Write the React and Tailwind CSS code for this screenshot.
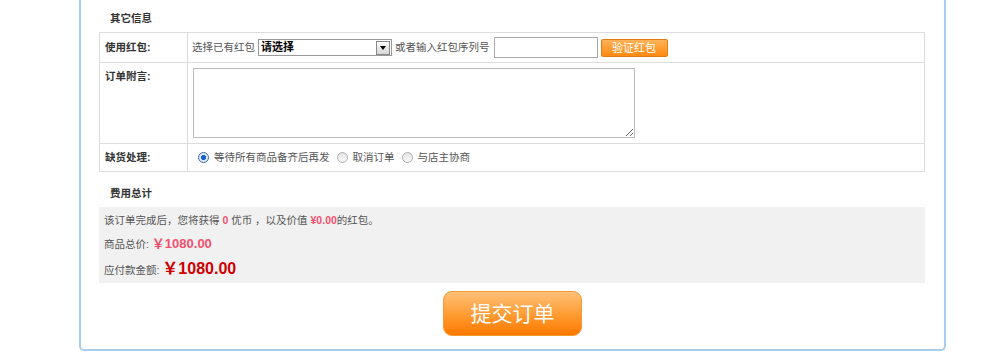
import { useState } from 'react';

const FONT = { fontFamily: '"Liberation Sans", Arial, "Noto Sans CJK SC", sans-serif' };

function Radio({ checked }) {
  return (
    <span className={`inline-block w-[11px] h-[11px] rounded-full border ${checked ? 'border-[#3a6ea5] bg-[radial-gradient(circle,#1a63c8_0,#1a63c8_35%,#dfe9f5_45%)]' : 'border-[#b0b0b0] bg-[linear-gradient(#e4e4e4,#fafafa)]'}`} />
  );
}

export default function App() {
  const [ship, setShip] = useState(0);
  const opts = ['等待所有商品备齐后再发', '取消订单', '与店主协商'];

  return (
    <div className="w-[982px] h-[354px] bg-white text-[10.5px] text-[#555] overflow-hidden" style={FONT}>
      <div className="ml-[79px] w-[867px] h-[351px] border-x-2 border-b-2 border-[#a9cdef] rounded-b-[5px] px-[18px]">
        <h3 className="h-[32px] pl-[11px] pt-[11px] font-bold text-[#333] leading-[14px]">其它信息</h3>

        <div className="w-[826px] border border-[#dcdcdc]">
          <div className="flex h-[30px] border-b border-[#dcdcdc]">
            <div className="w-[88px] shrink-0 border-r border-[#dcdcdc] pl-[5px] flex items-center font-bold text-[#333]">使用红包:</div>
            <div className="flex items-center pl-[4px]">
              <span>选择已有红包</span>
              <div className="ml-[3px] w-[134px] h-[17px] border border-[#999] flex items-center justify-between bg-white">
                <span className="pl-[2px] text-black font-bold text-[11px]">请选择</span>
                <span className="w-[14px] h-[14px] mr-[1px] border border-[#888] bg-[linear-gradient(#fafafa,#d8d8d8)] flex items-center justify-center">
                  <span className="block w-0 h-0 border-x-[3px] border-x-transparent border-t-[4px] border-t-black" />
                </span>
              </div>
              <span className="ml-[3px]">或者输入红包序列号</span>
              <input className="ml-[4px] w-[104px] h-[21px] border border-[#aaa] outline-none" />
              <button className="ml-[3px] w-[67px] h-[18px] rounded-[2px] border border-[#e07b10] bg-[linear-gradient(#ffb35a,#ff8a10)] text-white text-[11px] leading-[16px]">验证红包</button>
            </div>
          </div>

          <div className="flex h-[81px] border-b border-[#dcdcdc]">
            <div className="w-[88px] shrink-0 border-r border-[#dcdcdc] pl-[5px] pt-[6px] font-bold text-[#333]">订单附言:</div>
            <div className="pl-[5px] pt-[5px]">
              <textarea className="block w-[442px] h-[70px] border border-[#bbb] outline-none resize" />
            </div>
          </div>

          <div className="flex h-[27px]">
            <div className="w-[88px] shrink-0 border-r border-[#dcdcdc] pl-[5px] flex items-center font-bold text-[#333]">缺货处理:</div>
            <div className="flex items-center pl-[10px]">
              {opts.map((o, i) => (
                <label key={o} onClick={() => setShip(i)} className="flex items-center mr-[7px] cursor-pointer">
                  <Radio checked={ship === i} />
                  <span className="ml-[5px]">{o}</span>
                </label>
              ))}
            </div>
          </div>
        </div>

        <h3 className="h-[35px] pl-[11px] pt-[14px] font-bold text-[#333] leading-[14px]">费用总计</h3>

        <div className="w-[826px] h-[76px] bg-[#f1f1f1] pl-[5px] pt-[2px]">
          <p className="h-[22px] leading-[22px]">
            该订单完成后，您将获得 <b className="text-[#f0506e]">0</b> 优币 ，以及价值 <b className="text-[#f0506e]">¥0.00</b>的红包。
          </p>
          <p className="h-[25px] leading-[25px]">
            商品总价: <b className="text-[13px] text-[#f0506e]">￥1080.00</b>
          </p>
          <p className="h-[25px] leading-[25px]">
            应付款金额: <b className="text-[16px] text-[#cc0000]">￥1080.00</b>
          </p>
        </div>

        <div className="flex justify-center pt-[8px]">
          <button className="w-[139px] h-[45px] rounded-[9px] border border-[#f39a2e] bg-[linear-gradient(#ffc078,#ff9a30_55%,#ff7800)] text-white text-[21px] leading-none">提交订单</button>
        </div>
      </div>
    </div>
  );
}
